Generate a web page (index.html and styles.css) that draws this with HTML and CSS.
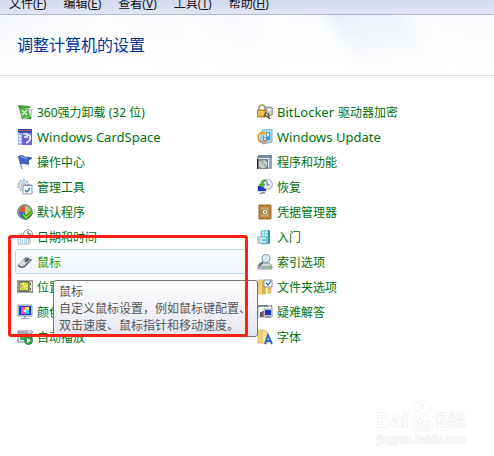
FILE: index.html
```html
<!doctype html>
<html lang="zh-CN">

<head>
  <meta charset="utf-8">
  <meta name="viewport" content="width=device-width, initial-scale=1">
  <title>调整计算机的设置</title>
  <link rel="stylesheet" href="styles.css">
</head>

<body>
  <nav class="menubar">
    <button type="button">文件(<u>F</u>)</button>
    <button type="button">编辑(<u>E</u>)</button>
    <button type="button">查看(<u>V</u>)</button>
    <button type="button">工具(<u>T</u>)</button>
    <button type="button">帮助(<u>H</u>)</button>
  </nav>

  <header class="banner">
    <h1>调整计算机的设置</h1>
  </header>

  <main class="panel">
    <ul class="items">
      <li>
        <a href="#uninstall">
          <svg viewBox="0 0 16 16"><path d="M1 1l11 1 2 2-12 1z" fill="#3f9f35"/><path d="M3 5h12l-1 10H5z" fill="#d5dcda" stroke="#a3b0ad" stroke-width=".7"/><path d="M2 4l9 1 2 7-8 3z" fill="#4bb336"/><path d="M5 6l5 5m0-5l-5 5" stroke="#e9fbe2" stroke-width="1.3"/><path d="M10 14l4-2v3h-4z" fill="#2f9a28"/></svg>
          360强力卸载 (32 位)
        </a>
      </li>
      <li>
        <a href="#cardspace">
          <svg viewBox="0 0 16 16"><path d="M1 0h14v16H1z" fill="#3f5fd6"/><path d="M1 4h4v12H1z" fill="#9dbdf8"/><path d="M1 0h14v3H1z" fill="#2645a8"/><path d="M2 6h2v2H2zM2 9h2v2H2zM2 12h2v2H2z" fill="#e3efff"/><path d="M5 4h10v12H5z" fill="#6a60dc"/><path d="M6 5h4v3H7m3-3c5 1 4 7-1 9" fill="none" stroke="#fff" stroke-width="1.6"/><path d="M1 1h14v1H1z" fill="#d4575c"/></svg>
          <span class="latin">Windows CardSpace</span>
        </a>
      </li>
      <li>
        <a href="#action">
          <svg viewBox="0 0 16 16"><path d="M1 2l4 13" stroke="#8a93a5" stroke-width="1.3"/><path d="M2 2c4-2 5 2 8 1l5 1-4 3 1 3c-4 1-5-2-8 0z" fill="#4166c5" stroke="#233f91" stroke-width=".7"/><path d="M3 3c3-1 4 2 7 1" fill="none" stroke="#91acef"/></svg>
          操作中心
        </a>
      </li>
      <li>
        <a href="#admin">
          <svg viewBox="0 0 16 16"><circle cx="6.500" cy="6.500" r="5" fill="#e3ecf5" stroke="#a9bdd0" stroke-width="2.400" stroke-dasharray="2 1.200"/><circle cx="6.500" cy="6.500" r="2.200" fill="#fff" stroke="#9db3c8"/><path d="M6 6h9v9H6z" fill="#fff" stroke="#8795a3"/><path d="M6 6h9v1H6z" fill="#8594a5"/><path d="M8 11l2 2 3-4" fill="none" stroke="#1878bd" stroke-width="1.300"/></svg>
          管理工具
        </a>
      </li>
      <li>
        <a href="#defaults">
          <svg viewBox="0 0 16 16"><circle cx="8" cy="8" r="7.300" fill="#8a939e" stroke="#626b75" stroke-width=".8"/><path d="M8 8V2a6 6 0 0 0-6 6z" fill="#df5536"/><path d="M8 8V2a6 6 0 0 1 6 6z" fill="#a9d56a"/><path d="M8 8H2a6 6 0 0 0 6 6z" fill="#3671d0"/><path d="M8 8h6a6 6 0 0 1-6 6z" fill="#f2c43b"/><path d="M6 10l3 4 6-6" fill="none" stroke="#167f19" stroke-width="3.200"/><path d="M6 10l3 4 6-6" fill="none" stroke="#73dd43" stroke-width="1.700"/></svg>
          默认程序
        </a>
      </li>
      <li>
        <a href="#datetime">
          <svg viewBox="0 0 16 16"><path d="M1 5h12v10H1z" fill="#f3f8fc" stroke="#a3b0bc"/><path d="M1 5h12v2H1z" fill="#bccad6"/><path d="M3 9h9M3 11h9M3 13h9" stroke="#70a8d2" stroke-dasharray="1 1"/><circle cx="11" cy="5" r="4.400" fill="#f2f3f4" stroke="#8c969f"/><path d="M11 2v3h3" fill="none" stroke="#55616c"/></svg>
          日期和时间
        </a>
      </li>
      <li class="hovered">
        <a href="#mouse" aria-describedby="mouse-tip">
          <svg viewBox="0 0 16 16"><path d="M1 11l7-7c2-1 6 0 7 2l-7 7c-2 2-7 1-7-2z" fill="#5c6269"/><path d="M2 10l6-6c2-1 5 0 6 1l-7 7c-2 1-5 0-5-2z" fill="#d8dce0"/><path d="M8 4c2-1 5 0 6 2l-3 3C10 7 8 6 6 6z" fill="#858c93"/><path d="M11 5L8 8" stroke="#30353a" stroke-width="1.300"/></svg>
          鼠标
        </a>
        <div class="tooltip" role="tooltip" id="mouse-tip">
          鼠标<br>
          自定义鼠标设置，例如鼠标键配置、<br>
          双击速度、鼠标指针和移动速度。
        </div>
      </li>
      <li>
        <a href="#location">
          <svg viewBox="0 0 16 16"><path d="M0 2h16v11H0z" fill="#eceadf" stroke="#454b4c"/><path d="M2 3h10v9H2z" fill="#c5ce45" stroke="#40493b"/><path d="M3 11l3-4 1-4M7 7h4M4 4l7 7" stroke="#fbfadb"/><path d="M9 3L5 8l3-1-1 4 4-6-3 1z" fill="#f5e719"/><path d="M13 4h1v2h-1zM13 9h1v2h-1z" fill="#555"/></svg>
          位置
        </a>
      </li>
      <li>
        <a href="#color">
          <svg viewBox="0 0 16 16"><path d="M1 1h14v11H1z" fill="#d9dde1" stroke="#8c969f"/><path d="M2 2h12v9H2z" fill="#183bd3"/><path d="M4 3h4v7H4z" fill="#ed4ba5"/><path d="M8 3h4v4H8z" fill="#ffe74c"/><path d="M8 6h4v4H8z" fill="#35c9e9"/><circle cx="8" cy="6.500" r="1.500" fill="#fff"/><path d="M7 12h2v2h3v1H4v-1h3z" fill="#9ba6ae"/></svg>
          颜色
        </a>
      </li>
      <li>
        <a href="#autoplay">
          <svg viewBox="0 0 16 16"><path d="M1 2h14v11H1z" fill="#f2f6f8" stroke="#7b8790"/><path d="M1 2h14v3H1z" fill="#9daab2"/><path d="M11 3h3" stroke="#fff"/><path d="M3 8h5v3H3z" fill="#52a36b"/><circle cx="11.500" cy="11.500" r="4" fill="#33a441" stroke="#18752a" stroke-width=".7"/><path d="M10 9l4 2.500-4 2.500z" fill="#fff"/></svg>
          自动播放
        </a>
      </li>
    </ul>

    <ul class="items">
      <li>
        <a href="#bitlocker">
          <svg viewBox="0 0 16 16"><path d="M2 6V4c0-4 6-4 6 0v3" fill="none" stroke="#a89468" stroke-width="1.600"/><path d="M0 6h8v7H0z" fill="#dfa72d" stroke="#9a6a16" stroke-width=".8"/><path d="M1 8h7M1 10h7" stroke="#f7d778"/><path d="M9 3h5l2 2v5l-3 2-4-3z" fill="#c8cbc8" stroke="#6f7573" stroke-width=".8"/><path d="M9 8l-2 5m1-2l5 4M11 9l1 5" stroke="#715a32" stroke-width="1.600"/><circle cx="12" cy="6" r="1.200" fill="#fff"/></svg>
          <span class="latin">BitLocker</span> 驱动器加密
        </a>
      </li>
      <li>
        <a href="#update">
          <svg viewBox="0 0 16 16"><path d="M5 1l10-1v13l-9 2-3-2z" fill="#a5d8f2" stroke="#6fabcb" stroke-width=".8"/><path d="M6 4l7-1v8l-7 1z" fill="#3e9ed2"/><path d="M7 5l2-.3v3L7 8zM10 4.500l2-.3v3l-2 .3zM7 9l2-.3v2L7 11z" fill="#d9f3fd"/><path d="M2 10c-2-4 1-7 5-6" fill="none" stroke="#ec9526" stroke-width="1.800"/><path d="M6 1l4 4-4 2z" fill="#f6ae39"/><path d="M1 10c2 4 7 4 9 1" fill="none" stroke="#e3862a" stroke-width="1.500"/></svg>
          <span class="latin">Windows Update</span>
        </a>
      </li>
      <li>
        <a href="#programs">
          <svg viewBox="0 0 16 16"><path d="M1 2h12v12H1z" fill="#e6eaec" stroke="#69747b"/><path d="M1 1h14v3H1z" fill="#7389a0"/><path d="M12 4h3v11h-3z" fill="#92a9b7"/><path d="M0 5h11v10H0z" fill="#7b8481"/><path d="M0 5h1v10H0z" fill="#222"/><circle cx="6" cy="10" r="4" fill="#c9d7d2"/><path d="M5 6l1 4 3 2" stroke="#799b82" stroke-width="1.500" fill="none"/><circle cx="6" cy="10" r="1.200" fill="#fff" stroke="#777" stroke-width=".6"/></svg>
          程序和功能
        </a>
      </li>
      <li>
        <a href="#recovery">
          <svg viewBox="0 0 16 16"><path d="M0 6h9v7H0z" fill="#d9dde3"/><path d="M1 7h8v5H1z" fill="#1735ae"/><path d="M4 13h4v2H2v-1h2z" fill="#9ca4ac"/><circle cx="10.500" cy="5.500" r="4.800" fill="#f0f4f8" stroke="#98a4b6"/><path d="M10 2v4h3" fill="none" stroke="#52637d"/><path d="M9 1C6 0 4 2 4 5H2l3 4 3-4H6c0-2 1-3 3-3z" fill="#54b83c" stroke="#27862a" stroke-width=".5"/></svg>
          恢复
        </a>
      </li>
      <li>
        <a href="#credentials">
          <svg viewBox="0 0 16 16"><path d="M2 1h12v14H2z" fill="#b68b3b" stroke="#8d6a2b"/><path d="M4 3h8v10H4z" fill="#dbb66b" stroke="#a88040"/><circle cx="8" cy="8" r="3" fill="#ede4c6" stroke="#8c7446"/><circle cx="8" cy="8" r="1" fill="#796c50"/></svg>
          凭据管理器
        </a>
      </li>
      <li>
        <a href="#start">
          <svg viewBox="0 0 16 16"><path d="M4 2l8-1v14H4z" fill="#7acbdc" stroke="#69bccd" stroke-width=".7"/><path d="M11 1l2 1v13l-2-1z" fill="#2899ad"/><path d="M5 3l2-.5v2L5 5zM8 2.500l2-.5v2l-2 .5zM5 6l2-.5v2H5zM8 5.500l2-.5v2H8z" fill="#c9f1f8"/><path d="M0 8h9v6H0z" fill="#e9fafd" stroke="#6da5b1" stroke-width=".8"/><path d="M1 10h3M1 12h3" stroke="#66a8b8"/><path d="M5 10h3v2H5z" fill="#45b9d0"/></svg>
          入门
        </a>
      </li>
      <li>
        <a href="#index">
          <svg viewBox="0 0 16 16"><path d="M3 9h9l3 3v3H1v-3z" fill="#d3d7da" stroke="#737c84" stroke-width=".8"/><path d="M1 12h14v2H1z" fill="#a4acb2"/><path d="M12 12h2v2h-2z" fill="#5dd232"/><path d="M6 8l-4 4" stroke="#626c74" stroke-width="2"/><circle cx="9" cy="4.700" r="4" fill="#d5eefc" stroke="#7993a8"/><path d="M7 4c0-1 1-2 2-2" fill="none" stroke="#fff"/></svg>
          索引选项
        </a>
      </li>
      <li>
        <a href="#folders">
          <svg viewBox="0 0 16 16"><path d="M1 1h6l2 2v12H1z" fill="#ecd37d" stroke="#d5b660" stroke-width=".7"/><path d="M5 2h3v13H5z" fill="#d9b24b"/><path d="M7 1h8v7H7z" fill="#fff" stroke="#86929d"/><path d="M9 4l2 2 3-4" fill="none" stroke="#286cb7" stroke-width="1.200"/><path d="M11 9h3v5h-3z" fill="#e7ce77" stroke="#b49448" stroke-width=".6"/></svg>
          文件夹选项
        </a>
      </li>
      <li>
        <a href="#trouble">
          <svg viewBox="0 0 16 16"><path d="M1 2h14v11H1z" fill="#f4f6f8" stroke="#b0b7be"/><path d="M1 1h14v2H1z" fill="#7d8792"/><path d="M11 2h3" stroke="#fff"/><path d="M7 5h8v7H7z" fill="#cfd4dc" stroke="#8a95a2" stroke-width=".7"/><path d="M8 6h6v5H8z" fill="#1930c4"/><path d="M3 8h2v5H3z" fill="#4a5872"/><path d="M5 7h2v6H5z" fill="#b55a68"/><path d="M8 13h6" stroke="#67717d"/></svg>
          疑难解答
        </a>
      </li>
      <li>
        <a href="#fonts">
          <svg viewBox="0 0 16 16"><path d="M1 1h6l3 2v11H1z" fill="#edd27a" stroke="#d5b660" stroke-width=".7"/><path d="M5 2l5 1v12l-5-1z" fill="#f5e19c" stroke="#cfaf5a" stroke-width=".5"/><path d="M8 15l3-9 4 9M9 12h5" fill="none" stroke="#2462ce" stroke-width="1.900"/></svg>
          字体
        </a>
      </li>
    </ul>

    <div class="marker"></div>
  </main>

  <div class="watermark">
    <div class="brand">
      <span>Bai</span>
      <svg class="paw" viewBox="0 0 28 30"><ellipse cx="4" cy="12" rx="3" ry="4"/><ellipse cx="10" cy="5" rx="3" ry="4.500"/><ellipse cx="18" cy="5" rx="3" ry="4.500"/><ellipse cx="24" cy="12" rx="3" ry="4"/><path d="M14 12c5 0 6 5 9 8 4 5 1 9-4 9-4-1-6-1-10 0-5 0-8-4-4-9 3-3 4-8 9-8z"/><text x="14" y="26">du</text></svg>
      <span class="exp">经验</span>
    </div>
    <div class="site">jingyan.baidu.com</div>
  </div>
</body>
</html>
```

FILE: styles.css
```css
body {
  margin: 0;
  min-height: 100vh;
  position: relative;
  background: #fff;
  font-family: "Noto Sans", "Noto Sans CJK SC", sans-serif;
  font-size: 12px;
}
.menubar {
  display: flex;
  align-items: flex-end;
  gap: 17px;
  height: 14px;
  padding-left: 9px;
  overflow: hidden;
  background: linear-gradient(#d4d9ec, #e0e4f5);
  border-bottom: 1px solid #b4b8cf;
}
.menubar button {
  padding: 0;
  border: 0;
  background: none;
  font: inherit;
  line-height: 20px;
  color: #111;
  white-space: nowrap;
}
.banner {
  height: 60px;
  border-bottom: 1px solid #dbe2ee;
  background:
    linear-gradient(to bottom, rgba(255, 255, 255, 0), #fff 90%),
    linear-gradient(65deg, #f3f6fb 0, #fcfdfe 24%, #f8fafd 38%, #fdfdff 40%, #f7f9fd 50%, #fcfdff 56%, #fafcff 66%, #eaf0f8 70%, #edf3f9 80%, #fbfcfe 86%, #fafbfe 100%);
}
.banner h1 {
  margin: 0;
  padding: 18px 17px;
  font-size: 16px;
  line-height: 24px;
  font-weight: normal;
  color: #003399;
}
.panel {
  position: relative;
  display: grid;
  grid-template-columns: 232px 232px;
  gap: 8px;
  padding: 23px 15px;
}
.items {
  margin: 0;
  padding: 0;
  list-style: none;
}
.items li {
  position: relative;
  height: 25px;
}
.items a {
  display: flex;
  align-items: center;
  gap: 4px;
  height: 23px;
  padding: 0 1px;
  border: 1px solid transparent;
  border-radius: 2px;
  color: #00700c;
  text-decoration: none;
  white-space: nowrap;
}
.items svg {
  width: 16px;
  height: 16px;
  flex: none;
}
.latin {
  font-size: 13px;
}
.items .hovered a {
  color: #12a012;
  border-color: #b8d6fb;
  background: linear-gradient(#fbfdff, #eff6fe);
}
.tooltip {
  position: absolute;
  z-index: 1;
  left: 38px;
  top: 31px;
  padding: 2px 6px 2px 5px;
  border: 1px solid #767676;
  border-radius: 3px;
  background: linear-gradient(#fff, #e4e5f0);
  color: #575757;
  line-height: 17px;
  white-space: nowrap;
}
/* red frame around the mouse entry */
.marker {
  position: absolute;
  z-index: 2;
  left: 8px;
  top: 159px;
  width: 234px;
  height: 96px;
  border: 3px solid #ff2015;
  border-radius: 3px;
  pointer-events: none;
}
.watermark {
  position: absolute;
  right: 28px;
  bottom: 10px;
  color: #fff;
  font-family: "Liberation Sans", "Noto Sans CJK SC", sans-serif;
  -webkit-text-stroke: 1px #e8e8e8;
  paint-order: stroke fill;
}
.brand {
  display: flex;
  align-items: flex-end;
  font-size: 20px;
  line-height: 24px;
  font-weight: bold;
}
.brand .exp {
  font-size: 15px;
}
.paw {
  width: 28px;
  height: 30px;
  fill: #fff;
  stroke: #e8e8e8;
}
.paw text {
  font-size: 13px;
  text-anchor: middle;
}
.site {
  font-size: 11px;
  line-height: 14px;
}
```
